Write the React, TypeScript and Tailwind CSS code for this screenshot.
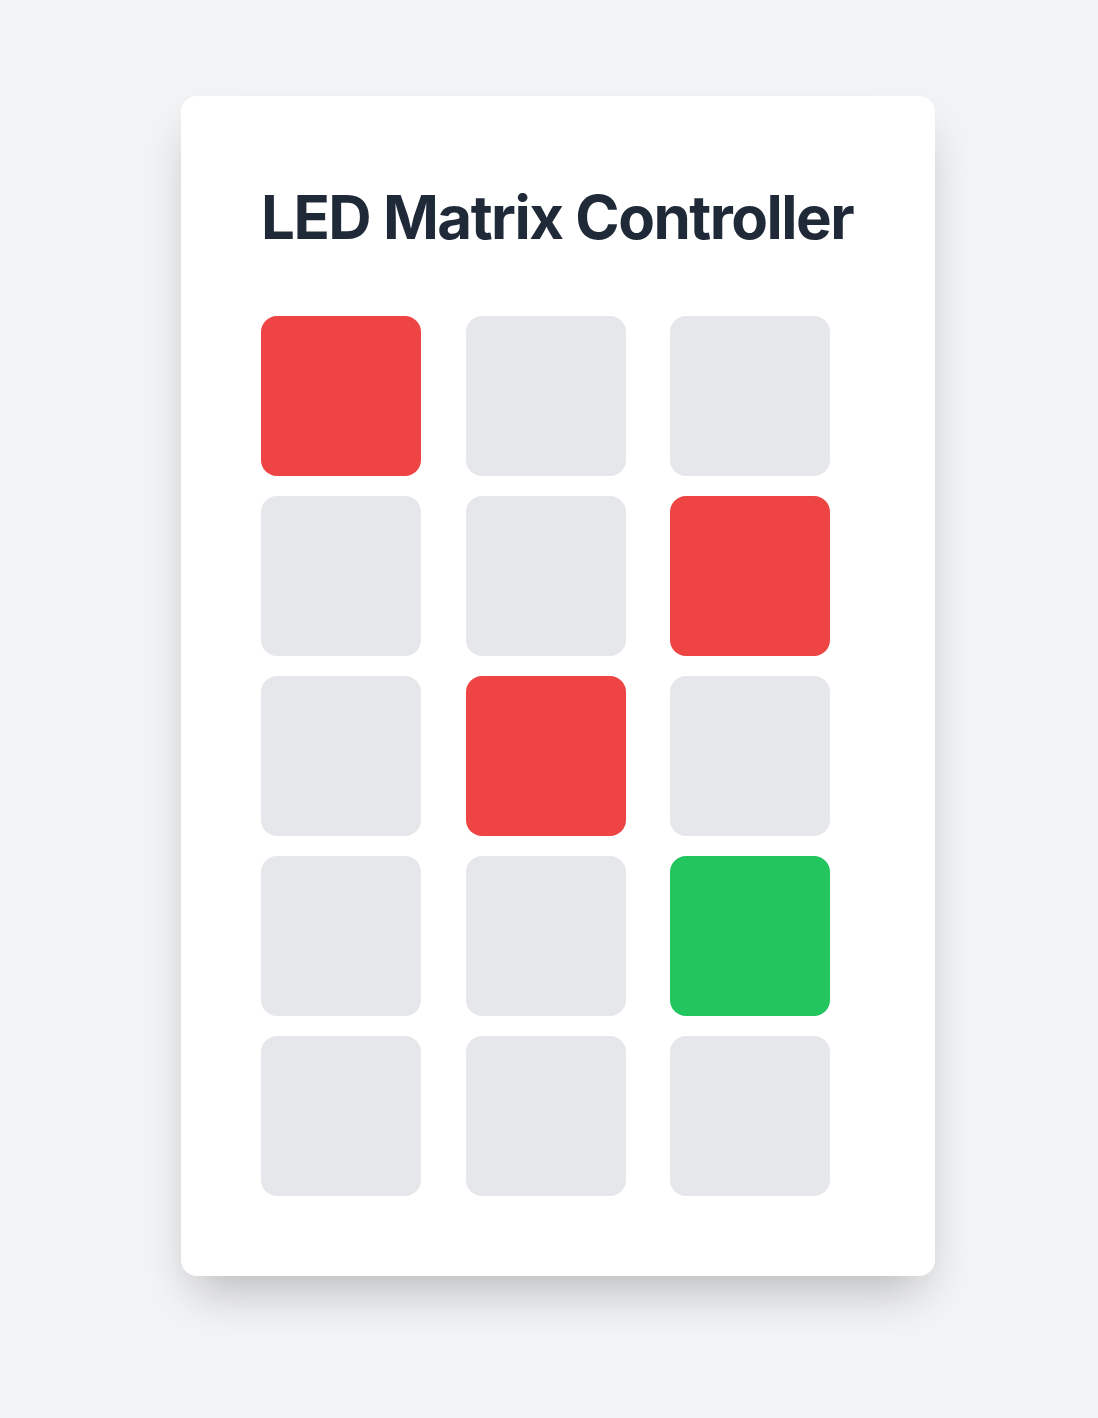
const cells = [
  'on-red', 'off', 'off',
  'off', 'off', 'on-red',
  'off', 'on-red', 'off',
  'off', 'off', 'on-green',
  'off', 'off', 'off',
];

export default function App() {
  return (
    <div className="min-h-screen bg-[#f3f4f6] flex justify-center pt-24 pl-[18px] pb-24 font-['Inter',sans-serif]">
      <div className="bg-white rounded-2xl shadow-2xl p-20 h-fit">
        {/* Title */}
        <h1 className="w-[594px] text-6xl leading-[82px] tracking-tight font-bold text-[#1f2937] mb-[58px] whitespace-nowrap">
          LED Matrix Controller
        </h1>

        {/* Matrix */}
        <div className="grid grid-cols-3 gap-5">
          {cells.map((state, i) => (
            <div
              key={i}
              className={
                state === 'on-red'
                  ? 'w-40 h-40 rounded-2xl bg-[#ef4444]'
                  : state === 'on-green'
                  ? 'w-40 h-40 rounded-2xl bg-[#22c55e]'
                  : 'w-40 h-40 rounded-2xl bg-[#e5e7eb]'
              }
            />
          ))}
        </div>
      </div>
    </div>
  );
}
